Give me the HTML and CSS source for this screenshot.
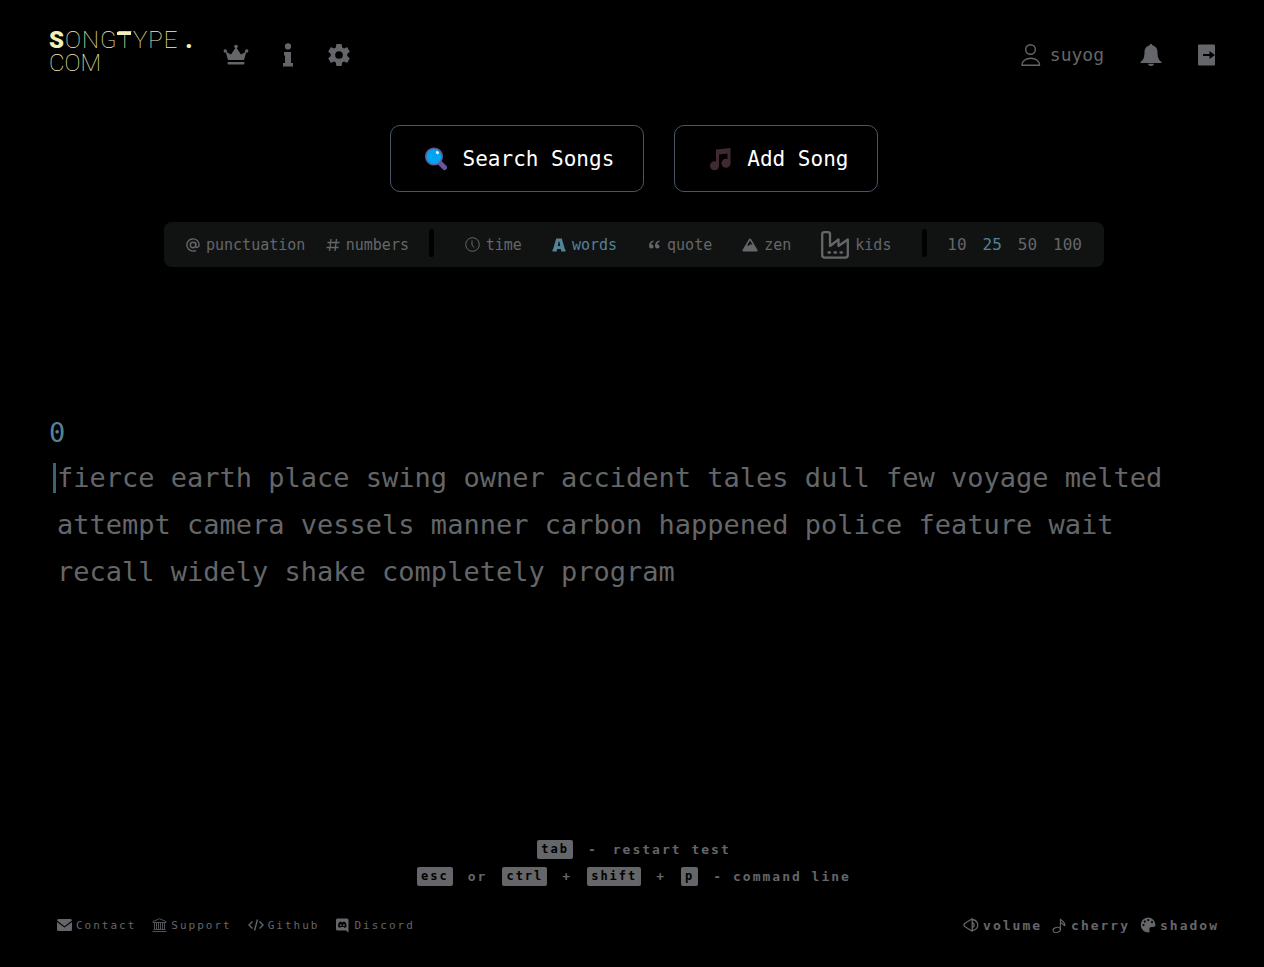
FILE: index.html
```html
<!DOCTYPE html>
<html lang="en">
<head>
<meta charset="utf-8">
<meta name="viewport" content="width=device-width, initial-scale=1">
<title>SongType</title>
<link rel="stylesheet" href="styles.css">
</head>
<body>
<div class="page">
  <header class="header">
    <a class="logo" href="#"><span class="logo-name"><span class="logo-s">S</span>ONG<span class="logo-t">T</span>YPE <span class="logo-dot">.</span></span><span class="logo-com">COM</span></a>
    <nav class="nav" aria-label="Main">
      <a class="icon-link" href="#" aria-label="Leaderboard"><svg width="26" height="22" viewBox="0 0 26 22" fill="currentColor"><path d="M5 16 2.600 7.500 8 10.500 13 3 18 10.500 23.400 7.500 21 16z"/><circle cx="13" cy="2.500" r="1.800"/><circle cx="2.300" cy="7" r="1.700"/><circle cx="23.700" cy="7" r="1.700"/><rect x="4.500" y="18" width="17" height="2.400" rx="1"/></svg></a>
      <a class="icon-link" href="#" aria-label="About"><svg width="10" height="24" viewBox="0 0 10 24" fill="currentColor"><circle cx="5" cy="3.400" r="3.100"/><path d="M1 9h7v11h2v3.500H0V20h2v-7.500H1z"/></svg></a>
      <a class="icon-link" href="#" aria-label="Settings"><svg width="24" height="24" viewBox="0 0 24 24" fill="currentColor"><path d="M19.430 12.980c.04-.32.07-.64.07-.98s-.03-.66-.07-.98l2.110-1.650c.19-.15.24-.42.12-.64l-2-3.460c-.12-.22-.39-.3-.61-.22l-2.490 1c-.52-.4-1.080-.73-1.690-.98l-.38-2.650C14.460 2.180 14.250 2 14 2h-4c-.25 0-.46.18-.49.42l-.38 2.650c-.61.25-1.170.59-1.690.98l-2.490-1c-.23-.09-.49 0-.61.22l-2 3.460c-.13.22-.07.49.12.64l2.110 1.650c-.04.32-.07.65-.07.98s.03.66.07.98l-2.110 1.650c-.19.15-.24.42-.12.64l2 3.460c.12.22.39.3.61.22l2.490-1c.52.4 1.080.73 1.690.98l.38 2.650c.03.24.24.42.49.42h4c.25 0 .46-.18.49-.42l.38-2.650c.61-.25 1.170-.59 1.690-.98l2.490 1c.23.09.49 0 .61-.22l2-3.460c.12-.22.07-.49-.12-.64zM12 15.500a3.500 3.500 0 1 1 0-7 3.500 3.500 0 0 1 0 7z" transform="translate(-1.200 -1.200) scale(1.100)"/></svg></a>
    </nav>
    <div class="account">
      <a class="user" href="#"><svg width="20" height="24" viewBox="0 0 20 24" fill="none" stroke="currentColor" stroke-width="1.400"><circle cx="9.500" cy="6.500" r="4.800"/><path d="M1 22.300c0-9.400 17.500-9.400 17.500 0z" stroke-linejoin="round"/></svg>suyog</a>
      <a class="icon-link" href="#" aria-label="Notifications"><svg width="22" height="24" viewBox="0 0 22 24" fill="currentColor"><path d="M11 1c1 0 1.500.7 1.500 1.500 3.500.7 5 3.500 5 6.500 0 4.500.6 7.500 4 10v1H.5v-1c3.400-2.500 4-5.500 4-10 0-3 1.500-5.800 5-6.500C9.500 1.700 10 1 11 1zM8 20.800h6c-.5 3-5.500 3-6 0z"/></svg></a>
      <a class="icon-link" href="#" aria-label="Log out"><svg width="18" height="22" viewBox="0 0 18 22" fill="currentColor"><rect width="17" height="21" x="0" y="0.500" rx="1"/><path d="M5 10h6.500V7l5.500 4-5.500 4v-3H5z" fill="#000"/></svg></a>
    </div>
  </header>

  <main class="main">
    <div class="actions">
      <button class="action" type="button"><svg width="24" height="24" viewBox="0 0 24 24"><path d="M16.500 16.500 20.500 20.500" stroke="#67569a" stroke-width="5" stroke-linecap="round"/><circle cx="10" cy="9.500" r="8.300" fill="#00a6ed" stroke="#67569a" stroke-width="1.500"/><ellipse cx="13.400" cy="5.600" rx="1.300" ry="1.600" fill="#fff" transform="rotate(-40 13.400 5.600)"/></svg>Search Songs</button>
      <button class="action" type="button"><svg width="24" height="24" viewBox="0 0 24 24" fill="#402a32"><path d="M8 2.500 22.500 1v16h-3V6.500L11 7.500V19H8z"/><circle cx="6.500" cy="18.800" r="4.500"/><circle cx="18" cy="16.300" r="4.500"/></svg>Add Song</button>
    </div>

    <div class="toolbar">
      <button class="option" type="button"><svg width="14" height="14" viewBox="0 0 14 14" fill="none" stroke="currentColor" stroke-width="1.400"><circle cx="7" cy="7" r="2.700"/><path d="M9.700 4.300v3.500c0 2.600 3.400 2 3.400-.8A6.100 6.100 0 1 0 10 12.300"/></svg>punctuation</button>
      <button class="option" type="button"><svg width="14" height="14" viewBox="0 0 14 14" fill="none" stroke="currentColor" stroke-width="1.300"><path d="M5 1 3.500 13M10.500 1 9 13M1.500 4.500h12M.5 9.500h12"/></svg>numbers</button>
      <span class="divider"></span>
      <div class="modes">
        <button class="option" type="button"><svg width="15" height="15" viewBox="0 0 15 15" fill="none" stroke="currentColor"><circle cx="7.500" cy="7.500" r="6.800"/><path d="M7 3.500V8l2 2.500"/></svg>time</button>
        <button class="option selected" type="button"><svg width="14" height="14" viewBox="0 0 14 14" fill="currentColor"><path d="M4.200.5h5.600L13 11.500h.5v2H9.300L8.800 11H5.200l-.5 2.500H.5v-2H1zM6.600 3.500 5.800 8h2.400l-.8-4.500z" fill-rule="evenodd"/></svg>words</button>
        <button class="option" type="button"><svg width="14" height="14" viewBox="0 0 14 14" fill="currentColor"><path d="M6.500 2.500C3.700 2.900 2 4.800 2 7.700c0 1.800 1 2.800 2.300 2.800a2.100 2.100 0 0 0 2.200-2.100c0-1.300-1-2.100-2.300-2 .1-1.400.9-1.900 2.300-2.300zM12.500 2.500C9.700 2.900 8 4.800 8 7.700c0 1.800 1 2.800 2.300 2.800a2.100 2.100 0 0 0 2.200-2.100c0-1.300-1-2.100-2.300-2 .1-1.400.9-1.900 2.300-2.300z"/></svg>quote</button>
        <button class="option" type="button"><svg width="16" height="14" viewBox="0 0 16 14" fill="currentColor"><path fill-rule="evenodd" d="M8 .5c.5 0 .8.3 1 .6l6.500 11c.4.800 0 1.400-.8 1.400H1.300c-.8 0-1.200-.6-.8-1.400L7 1.100c.2-.3.5-.6 1-.6zM8 2.500 5.200 7.200 6.500 8 8 6.500h2.500z"/></svg>zen</button>
        <button class="option" type="button"><svg width="28" height="28" viewBox="0 0 28 28" fill="none" stroke="currentColor" stroke-width="2.300" stroke-linejoin="round" stroke-linecap="round"><path d="M3.500 1.200h3.500a2 2 0 0 1 2 2V15l8.500-6.500V15L26.800 8.500V24a2.600 2.600 0 0 1-2.600 2.600H3.800A2.600 2.600 0 0 1 1.200 24V3.500a2.300 2.300 0 0 1 2.300-2.300zM7.500 21.500h1.500M13.500 21.500h1.500M19.500 21.500h1.500"/></svg>kids</button>
      </div>
      <span class="divider"></span>
      <div class="counts">
        <button class="count" type="button">10</button>
        <button class="count selected" type="button">25</button>
        <button class="count" type="button">50</button>
        <button class="count" type="button">100</button>
      </div>
    </div>

    <section class="test">
      <div class="counter">0</div>
      <p class="words"><span class="caret"></span>fierce earth place swing owner accident tales dull few voyage melted attempt camera vessels manner carbon happened police feature wait recall widely shake completely program</p>
    </section>
  </main>

  <footer class="footer">
    <div class="hints">
      <div class="hint"><kbd>tab</kbd><span>-</span><span>restart test</span></div>
      <div class="hint"><kbd>esc</kbd><span>or</span><kbd>ctrl</kbd><span>+</span><kbd>shift</kbd><span>+</span><kbd>p</kbd><span>- command line</span></div>
    </div>
    <div class="bottom">
      <nav class="links" aria-label="Footer">
        <a href="#"><svg width="15" height="12" viewBox="0 0 15 12" fill="currentColor"><path d="M1.500 0h12A1.500 1.500 0 0 1 15 1.500L7.500 7.200 0 1.500A1.500 1.500 0 0 1 1.500 0zM0 3l7.500 5.600L15 3v7.500a1.500 1.500 0 0 1-1.500 1.500h-12A1.500 1.500 0 0 1 0 10.500z"/></svg>Contact</a>
        <a href="#"><svg width="15" height="14" viewBox="0 0 15 14" fill="none" stroke="currentColor" stroke-width="0.800"><path d="M1 4.500v-1L7.500.7 14 3.500v1zM1.500 11.500h12M.5 13.500h14M2.500 5v6M4.500 5v6M6.500 5v6M8.500 5v6M10.500 5v6M12.500 5v6"/></svg>Support</a>
        <a href="#"><svg width="16" height="14" viewBox="0 0 16 14" fill="none" stroke="currentColor" stroke-width="1.400"><path d="M4.500 3.500 1 7l3.500 3.500M11.500 3.500 15 7l-3.500 3.500M9.500 1.500l-3 11"/></svg>Github</a>
        <a href="#"><svg width="15" height="15" viewBox="0 0 14 15" fill="currentColor"><path fill-rule="evenodd" d="M2 .5h9.500A1.500 1.500 0 0 1 13 2v12.700L10.500 12.500H2A1.500 1.500 0 0 1 .5 11V2A1.500 1.500 0 0 1 2 .5zM3.600 4.200C2.800 5.500 2.500 7 2.500 8.800c.8.700 1.600.9 2.300 1l.5-.9h3l.5.900c.8-.1 1.600-.4 2.300-1 0-1.800-.4-3.300-1.200-4.600-.7-.4-1.300-.5-1.900-.6l-.3.600H5.900l-.3-.6c-.7.100-1.300.2-2 .6zM5.200 6.300a.9.900 0 1 1 0 1.800.9.900 0 0 1 0-1.800zM8.400 6.300a.9.900 0 1 1 0 1.800.9.900 0 0 1 0-1.800z"/></svg>Discord</a>
      </nav>
      <div class="prefs">
        <button type="button"><svg width="16" height="14" viewBox="0 0 16 14" fill="none" stroke="currentColor" stroke-width="1.300" stroke-linejoin="round"><path d="M9.200.8v12.400L2 8.700C.6 7.500.6 6.500 2 5.300zM9.200 4.300c2.600 1.300 2.600 4.100 0 5.400M9.500 1.500c7 1.500 7 9.500 0 11"/></svg>volume</button>
        <button type="button"><svg width="15" height="15" viewBox="0 0 15 15" fill="none" stroke="currentColor" stroke-width="1.100"><ellipse cx="4.700" cy="12" rx="3.700" ry="2.500" transform="rotate(-15 4.700 12)"/><path d="M8.400 12V.8c.5 2.500 5 2.500 4.500 7M8.400 4c1 2 3.500 2 4.500 4"/></svg>cherry</button>
        <button type="button"><svg width="16" height="16" viewBox="0 0 16 16" fill="currentColor"><path fill-rule="evenodd" d="M8 .5A7.500 7.500 0 1 0 8.500 15.500C10.500 15.300 9.200 13 9.300 11.800 9.500 10 11.200 10 12.800 10c1.800 0 2.700-.9 2.700-2A7.500 7.500 0 0 0 8 .5zM3.500 7a1.100 1.100 0 1 1 0 2.200 1.100 1.100 0 0 1 0-2.200zM4.800 3.500a1.100 1.100 0 1 1 0 2.200 1.100 1.100 0 0 1 0-2.200zM8.300 2a1.100 1.100 0 1 1 0 2.200 1.100 1.100 0 0 1 0-2.200zM12 4a1.100 1.100 0 1 1 0 2.200A1.100 1.100 0 0 1 12 4z"/></svg>shadow</button>
      </div>
    </div>
  </footer>
</div>
</body>
</html>
```
FILE: styles.css
```css
* { box-sizing: border-box; }

body {
  margin: 0;
  background: #000;
  color: #646669;
  font-family: "DejaVu Sans Mono", monospace;
}

a { color: inherit; text-decoration: none; }
svg { display: block; flex: none; }

button {
  margin: 0;
  padding: 0;
  border: 0;
  background: none;
  color: inherit;
  font: inherit;
  cursor: pointer;
}

.page {
  display: flex;
  flex-direction: column;
  min-height: 100vh;
  padding: 27px 45px 33px 49px;
}

.header {
  display: flex;
  align-items: flex-start;
  height: 51px;
}

.logo {
  display: flex;
  flex-direction: column;
  padding-top: 2px;
  color: #f2f0b6;
  font: 100 24px/23px Roboto, sans-serif;
  white-space: nowrap;
}
.logo-name { letter-spacing: 1px; }
.logo-s, .logo-dot { font-weight: 900; }
.logo-t {
  background: linear-gradient(currentColor, currentColor) 0 6px / 14px 3px no-repeat;
}

.nav {
  display: flex;
  align-items: center;
  gap: 34px;
  height: 55px;
  margin-left: 30px;
}

.account {
  display: flex;
  align-items: center;
  gap: 36px;
  height: 55px;
  margin-left: auto;
  padding-right: 3px;
}

.user {
  display: flex;
  align-items: center;
  gap: 9px;
  font-size: 18px;
}

.main { flex: 1; }

.actions {
  display: flex;
  justify-content: center;
  gap: 30px;
  margin-top: 47px;
}

.action {
  display: flex;
  align-items: center;
  gap: 15px;
  height: 67px;
  padding: 0 29px 0 33px;
  border: 1px solid #4a5568;
  border-radius: 10px;
  color: #fff;
  font-size: 21px;
}

.toolbar {
  display: flex;
  align-items: center;
  justify-content: space-between;
  max-width: 940px;
  height: 45px;
  margin: 30px auto 0;
  padding: 0 22px;
  border-radius: 8px;
  background: #111312;
  font-size: 15px;
}

.option {
  display: flex;
  align-items: center;
  gap: 6px;
}

.selected { color: #548299; }

.divider {
  width: 5px;
  height: 28px;
  margin-bottom: 3px;
  border-radius: 3px;
  background: #000;
}

.modes {
  display: flex;
  align-items: center;
  gap: 30px;
  padding: 0 10px;
}

.counts {
  display: flex;
  gap: 16px;
  font-size: 16px;
}

.test { margin-top: 148px; }

.counter {
  color: #548299;
  font-size: 27px;
  line-height: 36px;
}

.words {
  position: relative;
  margin: 3px 0 0;
  padding-left: 8px;
  font-size: 27px;
  line-height: 47px;
}

.caret {
  position: absolute;
  top: 9px;
  left: 4px;
  width: 3px;
  height: 30px;
  background: #3d6273;
}

.hints {
  display: flex;
  flex-direction: column;
  align-items: center;
  gap: 8px;
  font-size: 13px;
  font-weight: bold;
  letter-spacing: 2px;
}

.hint {
  display: flex;
  align-items: center;
  gap: 15px;
}

kbd {
  padding: 0 4px;
  border-radius: 2px;
  background: #646669;
  color: #000;
  font-family: inherit;
  font-size: 12px;
  line-height: 19px;
}

.bottom {
  display: flex;
  align-items: center;
  justify-content: space-between;
  height: 18px;
  margin-top: 30px;
  padding-left: 8px;
}

.links, .prefs { display: flex; align-items: center; }
.links { gap: 16px; font-size: 11px; }
.prefs { gap: 10px; font-size: 13px; font-weight: bold; }
.links a, .prefs button { display: flex; align-items: center; gap: 4px; letter-spacing: 2px; }
```
